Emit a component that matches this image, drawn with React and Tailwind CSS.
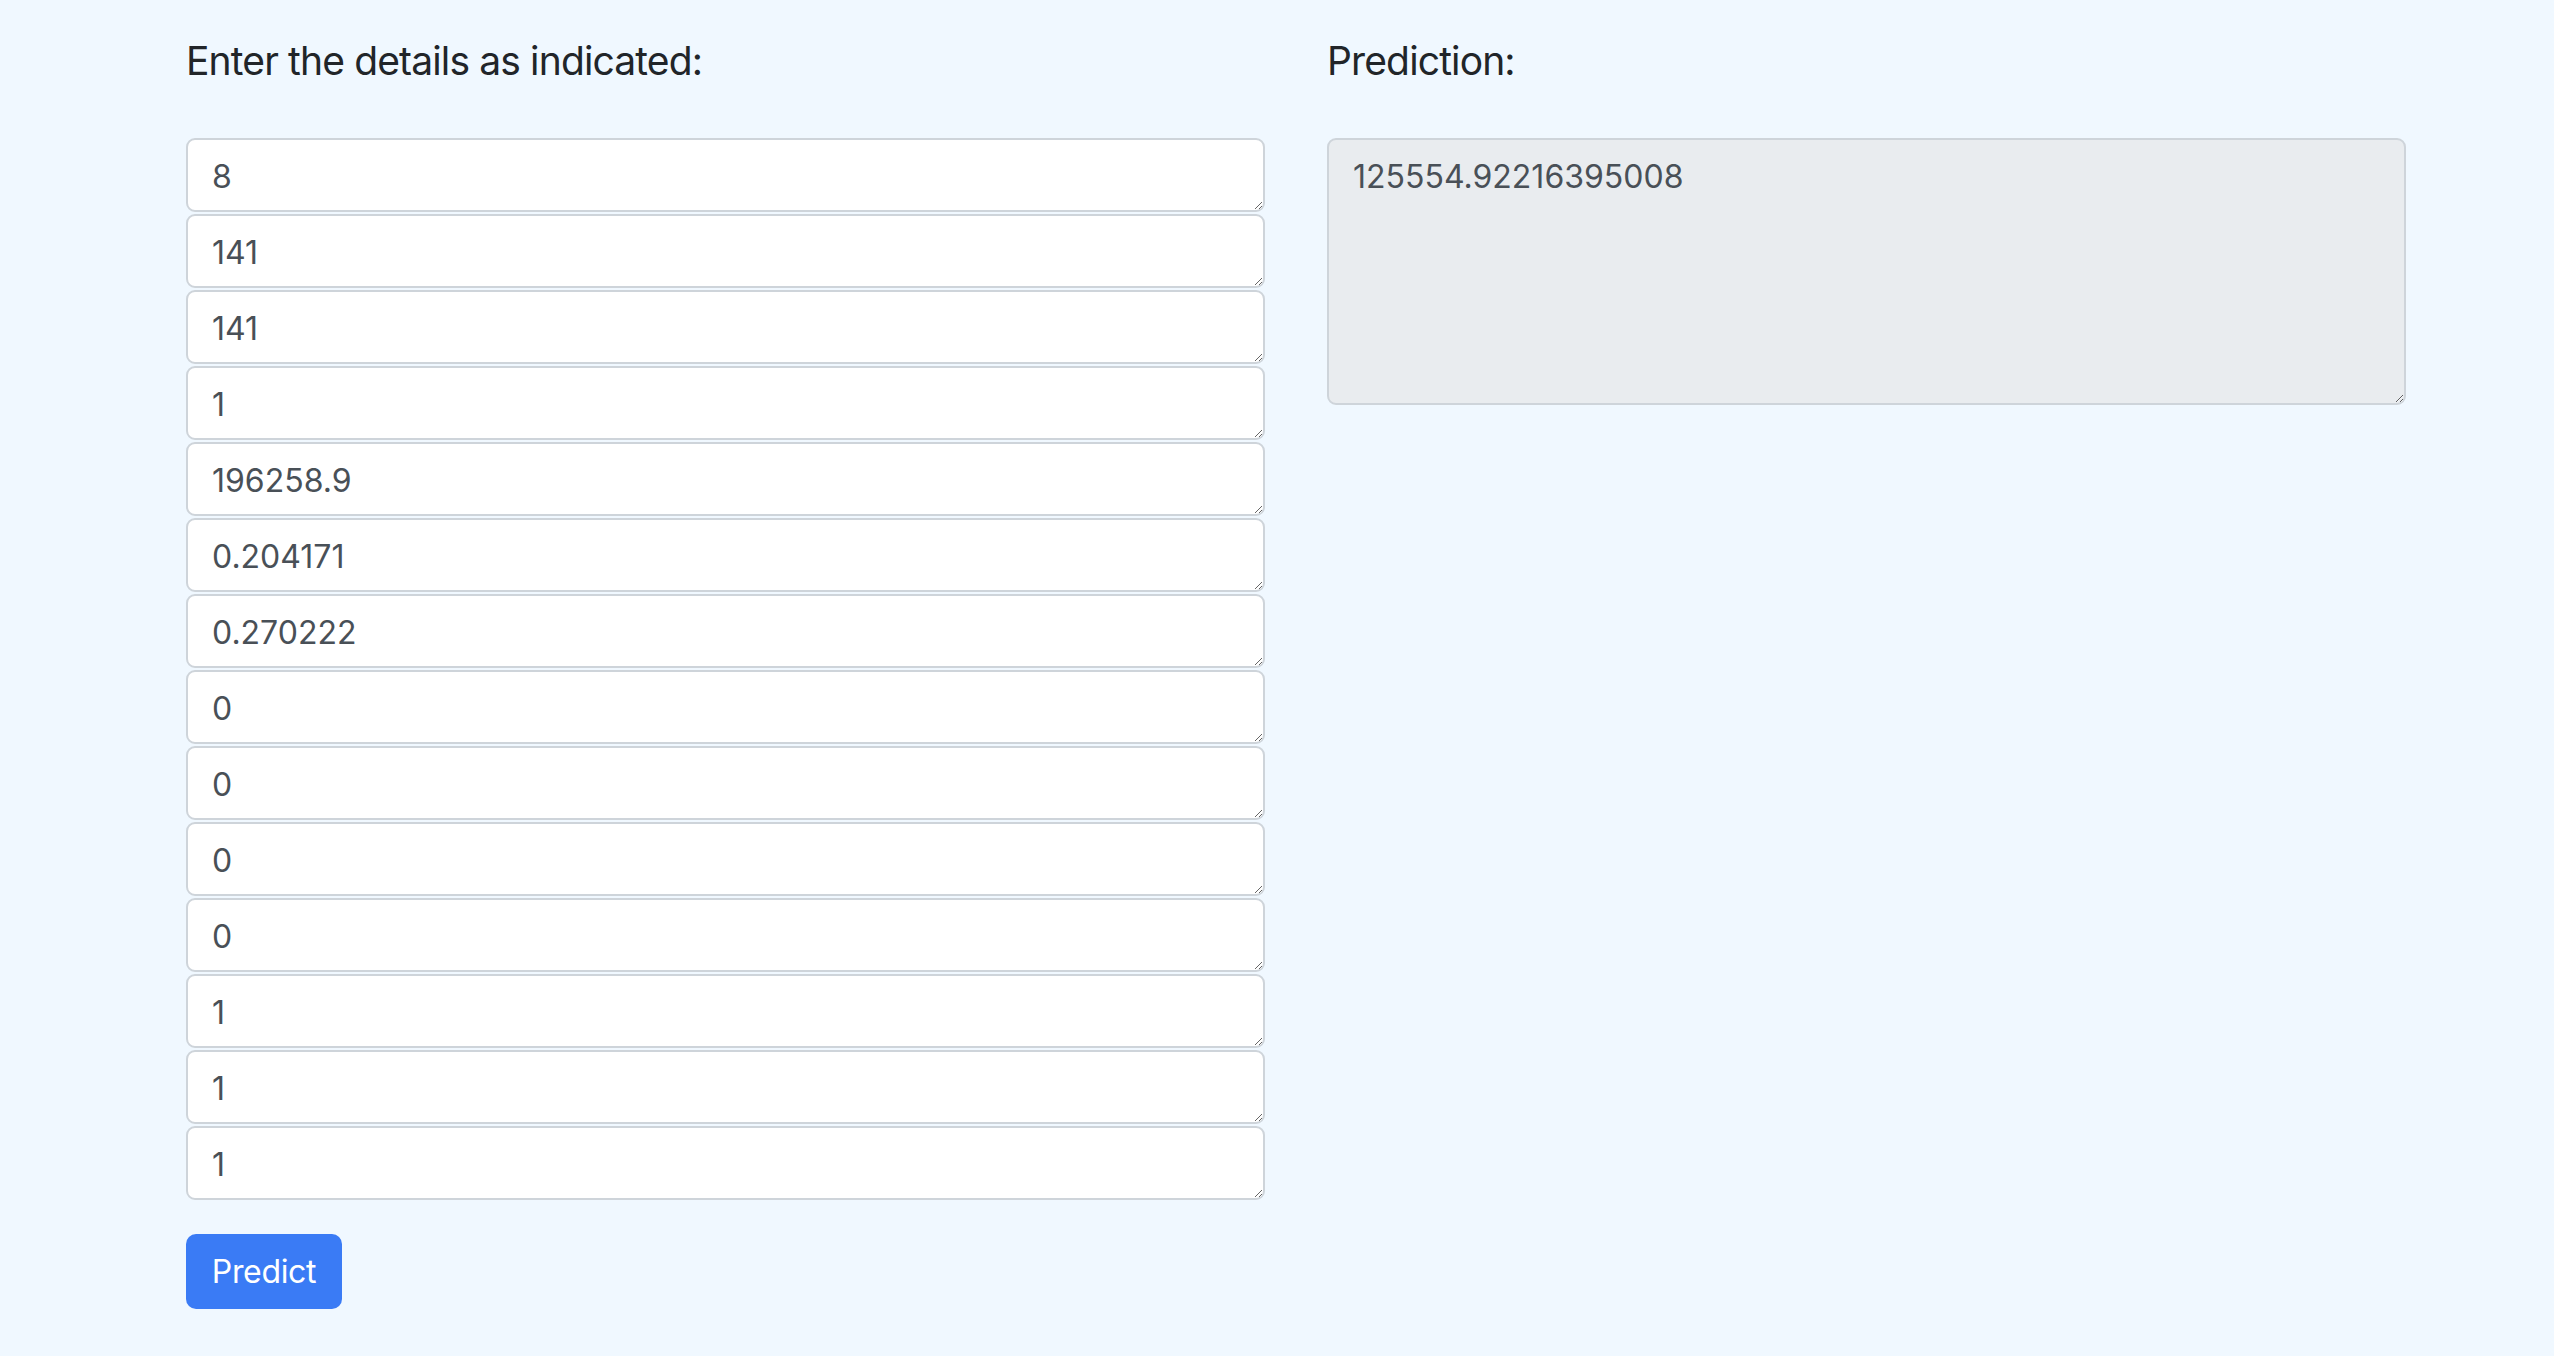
const values = ["8", "141", "141", "1", "196258.9", "0.204171", "0.270222", "0", "0", "0", "0", "1", "1", "1"];

export default function App() {
  return (
    <div className="min-h-[1356px] w-full bg-[#f0f8ff] font-['Inter','Noto_Sans',sans-serif]">
      <div className="ml-[186px] grid w-[2220px] grid-cols-2 gap-[62px] pt-[37px]">
        <div>
          <h4 className="h-[48px] text-[39px] leading-[48px] tracking-[-0.022em] text-[#212529]">Enter the details as indicated:</h4>
          <div className="mt-[53px] flex flex-col gap-[2px]">
            {values.map((v, i) => (
              <textarea
                key={i}
                rows={1}
                defaultValue={v}
                className="block h-[74px] w-full rounded-[9px] border-2 border-[#ced4da] bg-white px-[24px] pt-[13px] pb-[9px] text-[32px] leading-[48px] text-[#495057] outline-none"
              />
            ))}
          </div>
          <button className="mt-[34px] h-[75px] w-[156px] rounded-[10px] bg-[#3a7bf5] text-[32px] tracking-[-0.01em] text-white">Predict</button>
        </div>
        <div>
          <h4 className="h-[48px] text-[39px] leading-[48px] tracking-[-0.022em] text-[#212529]">Prediction:</h4>
          <textarea
            readOnly
            defaultValue="125554.92216395008"
            className="mt-[53px] block h-[267px] w-full rounded-[9px] border-2 border-[#ced4da] bg-[#e9ecef] px-[24px] pt-[13px] pb-[9px] text-[32px] leading-[48px] text-[#495057] outline-none"
          />
        </div>
      </div>
    </div>
  );
}
